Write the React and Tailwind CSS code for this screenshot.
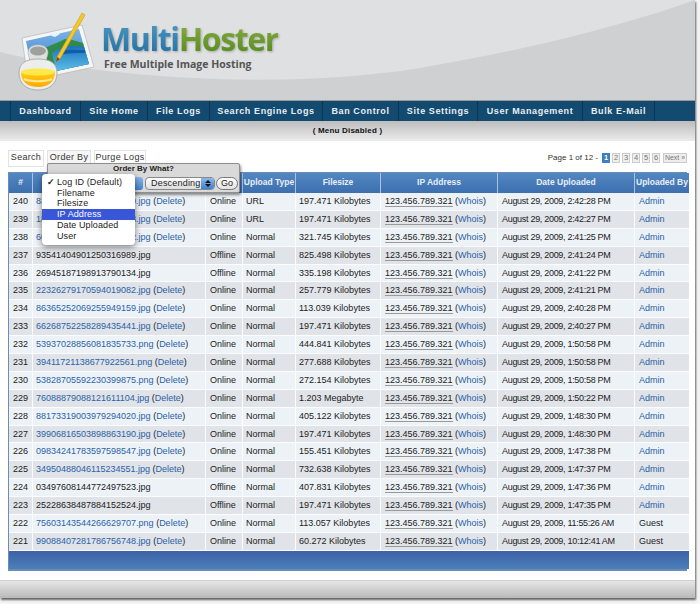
import React from 'react'

const menu = [
  { label: 'Dashboard', w: 'w-[70px]' },
  { label: 'Site Home', w: 'w-[67px]' },
  { label: 'File Logs', w: 'w-[62px]' },
  { label: 'Search Engine Logs', w: 'w-[113px]' },
  { label: 'Ban Control', w: 'w-[76px]' },
  { label: 'Site Settings', w: 'w-[79px]' },
  { label: 'User Management', w: 'w-[105px]' },
  { label: 'Bulk E-Mail', w: 'w-[72px]' },
]

const rows = [
  [240, '83483172390296749650.jpg', 'Online', 'URL', '197.471 Kilobytes', '2:42:28 PM'],
  [239, '18461205773410964218.jpg', 'Online', 'URL', '197.471 Kilobytes', '2:42:27 PM'],
  [238, '60791352448399702002.jpg', 'Online', 'Normal', '321.745 Kilobytes', '2:41:25 PM'],
  [237, '93541404901250316989.jpg', 'Offline', 'Normal', '825.498 Kilobytes', '2:41:24 PM'],
  [236, '26945187198913790134.jpg', 'Offline', 'Normal', '335.198 Kilobytes', '2:41:22 PM'],
  [235, '22326279170594019082.jpg', 'Online', 'Normal', '257.779 Kilobytes', '2:41:21 PM'],
  [234, '86365252069255949159.jpg', 'Online', 'Normal', '113.039 Kilobytes', '2:40:28 PM'],
  [233, '66268752258289435441.jpg', 'Online', 'Normal', '197.471 Kilobytes', '2:40:27 PM'],
  [232, '53937028856081835733.png', 'Online', 'Normal', '444.841 Kilobytes', '1:50:58 PM'],
  [231, '39411721138677922561.png', 'Online', 'Normal', '277.688 Kilobytes', '1:50:58 PM'],
  [230, '53828705592230399875.png', 'Online', 'Normal', '272.154 Kilobytes', '1:50:58 PM'],
  [229, '76088879088121611104.jpg', 'Online', 'Normal', '1.203 Megabyte', '1:50:22 PM'],
  [228, '88173319003979294020.jpg', 'Online', 'Normal', '405.122 Kilobytes', '1:48:30 PM'],
  [227, '39906816503898863190.jpg', 'Online', 'Normal', '197.471 Kilobytes', '1:48:30 PM'],
  [226, '09834241783597598547.jpg', 'Online', 'Normal', '155.451 Kilobytes', '1:47:38 PM'],
  [225, '34950488046115234551.jpg', 'Online', 'Normal', '732.638 Kilobytes', '1:47:37 PM'],
  [224, '03497608144772497523.jpg', 'Offline', 'Normal', '407.831 Kilobytes', '1:47:36 PM'],
  [223, '25228638487884152524.jpg', 'Offline', 'Normal', '197.471 Kilobytes', '1:47:35 PM'],
  [222, '75603143544266629707.png', 'Online', 'Normal', '113.057 Kilobytes', '11:55:26 AM'],
  [221, '99088407281786756748.jpg', 'Online', 'Normal', '60.272 Kilobytes', '10:12:41 AM'],
]

const headCell = "border-r border-[#a9c3e0] text-center text-[8.5px] font-bold text-[#e8eef6] p-0 pb-[1px] whitespace-nowrap"
const cell = "border-r border-b border-[#fafcfd] px-[3px] py-0 h-[17.9px] leading-[11px] whitespace-nowrap overflow-hidden"
const link = "text-[#2a62a8]"

function Logo() {
  return (
    <svg width="86" height="86" viewBox="0 0 86 86" className="absolute left-[16px] top-[9px]">
      <defs>
        <linearGradient id="sky" x1="0" y1="0" x2="0" y2="1">
          <stop offset="0" stopColor="#7db4e8" />
          <stop offset="1" stopColor="#2f77c4" />
        </linearGradient>
        <linearGradient id="water" x1="0" y1="0" x2="0" y2="1">
          <stop offset="0" stopColor="#1d6fc0" />
          <stop offset="1" stopColor="#5cc0e8" />
        </linearGradient>
        <linearGradient id="oil" x1="0" y1="0" x2="0" y2="1">
          <stop offset="0" stopColor="#ffd21a" />
          <stop offset="1" stopColor="#ffa800" />
        </linearGradient>
      </defs>
      <polygon points="6,29 66,16 78,58 12,72" fill="#f6f6f6" stroke="#b5b5b5" strokeWidth="0.7" />
      <polygon points="10,32 63,20 73,55 17,67" fill="url(#sky)" />
      <path d="M33 25l8-2 3 2-5 3-3-1z" fill="#e8f3fc" />
      <path d="M13 47 C28 38 40 35 49 30 C56 30 62 33 67 34 L73 55 L17 67z" fill="#2f8b45" />
      <path d="M36 44 C46 36 58 36 68 38 L73 55 L40 62z" fill="url(#water)" />
      <path d="M44 42 C52 40 60 41 69 41 L69 44 C60 44 52 44 44 46z" fill="#0f5ea8" />
      <path d="M66 4 L69 6 L44 50 L40 53 L41 48z" fill="#f3c928" stroke="#c79a14" strokeWidth="0.6" />
      <path d="M41 48 L44 50 L40 53z" fill="#7a4a18" />
      <path d="M12 44 C12 38 17 36 22 36 C27 36 32 38 32 44 L30 52 L14 52z" fill="#dfe1df" stroke="#b8b8b8" strokeWidth="0.6" />
      <ellipse cx="22" cy="42" rx="8" ry="4.500" fill="#9ea09e" />
      <path d="M3 64 C3 54 10 50 22 50 C34 50 41 54 41 64 C41 75 33 81 22 81 C11 81 3 75 3 64z" fill="#eceded" stroke="#a0a0a0" strokeWidth="0.8" />
      <path d="M5 63 C12 60 32 60 39 63 C39 73 32 78 22 78 C12 78 5 73 5 63z" fill="url(#oil)" />
      <ellipse cx="22" cy="63" rx="17" ry="3.500" fill="#ffe84a" />
      <path d="M8 70 C14 73 30 73 36 70" stroke="#ffe98a" strokeWidth="2" fill="none" />
    </svg>
  )
}

function Header() {
  return (
    <div className="relative h-[100px] overflow-hidden bg-[#dfe0e1]">
      {/* swoosh behind the logo */}
      <svg width="695" height="100" viewBox="0 0 695 100" className="absolute left-0 top-0">
        <path d="M0 52 C120 82 300 88 420 68 C540 48 640 20 695 0 L695 100 L0 100z" fill="#cfd0d1" />
      </svg>
      <Logo />
      <div className="absolute left-[101px] top-[20px] text-[32px] leading-[38px] font-bold tracking-[-1.4px] font-['Open_Sans',sans-serif] whitespace-nowrap drop-shadow-[1px_1px_1px_rgba(0,0,0,0.25)]">
        <span className="bg-gradient-to-b from-[#4f9fc9] to-[#1f6a9c] bg-clip-text text-transparent">Multi</span>
        <span className="bg-gradient-to-b from-[#8fb545] to-[#4f8418] bg-clip-text text-transparent">Hoster</span>
      </div>
      <div className="absolute left-[104px] top-[57px] text-[10.5px] leading-[14px] font-bold text-[#555] font-['Open_Sans',sans-serif] whitespace-nowrap">
        Free Multiple Image Hosting
      </div>
    </div>
  )
}

function Nav() {
  return (
    <div className="flex h-[21px] border-t border-[#9a9a9a] bg-[#124a70]">
      <div className="w-[11px] border-r border-[#0b3552]"></div>
      {menu.map((m) => (
        <div key={m.label} className={m.w + " flex items-center justify-center pt-[1px] border-r border-[#0b3552] text-[9px] font-bold tracking-[0.6px] text-[#e9eef2]"}>
          {m.label}
        </div>
      ))}
    </div>
  )
}

function Tabs() {
  return (
    <div className="flex items-center justify-between h-[31px] pl-[8px] pr-[8px] pt-[3px]">
      <div className="flex gap-[3px] text-[9px] tracking-[0.3px] text-[#333] whitespace-nowrap">
        <div className="w-[36px] h-[17px] flex items-center justify-center border border-[#e2e2e2] bg-white">Search</div>
        <div className="w-[44px] h-[17px] flex items-center justify-center border border-[#e2e2e2] bg-[#f6f6f6]">Order By</div>
        <div className="w-[52px] h-[17px] flex items-center justify-center border border-[#e2e2e2] bg-white">Purge Logs</div>
      </div>
      <div className="flex items-center gap-[2px] text-[7.5px] text-[#555] whitespace-nowrap">
        <span className="mr-[2px] text-[8px] text-[#333]">Page 1 of 12 -</span>
        <span className="w-[8px] h-[10px] flex items-center justify-center bg-[#3f7fc0] font-bold text-white">1</span>
        {[2, 3, 4, 5, 6].map((n) => (
          <span key={n} className="w-[8px] h-[10px] flex items-center justify-center border border-[#ccc] bg-[#eee] text-[#777]">{n}</span>
        ))}
        <span className="ml-[1px] w-[24px] h-[10px] flex items-center justify-center border border-[#ccc] bg-[#eee] text-[7px] text-[#777]">Next »</span>
      </div>
    </div>
  )
}

function Table() {
  return (
    <div className="mx-[8px] border border-[#6d8cb5] border-r-2 border-b-2 bg-[#3f6dab]">
      <table className="table-fixed w-[680px] border-separate border-spacing-0 text-[9px] text-[#222]">
        <colgroup>
          <col className="w-[24px]" />
          <col className="w-[173px]" />
          <col className="w-[37px]" />
          <col className="w-[53px]" />
          <col className="w-[85px]" />
          <col className="w-[117px]" />
          <col className="w-[137px]" />
          <col className="w-[54px]" />
        </colgroup>
        <thead>
          <tr className="h-[20px] bg-gradient-to-b from-[#5288c2] to-[#3d6fae]">
            <th className={headCell}>#</th>
            <th className={headCell}>Filename</th>
            <th className={headCell}>Status</th>
            <th className={headCell}>Upload Type</th>
            <th className={headCell}>Filesize</th>
            <th className={headCell}>IP Address</th>
            <th className={headCell}>Date Uploaded</th>
            <th className="text-center text-[8.5px] font-bold text-[#e8eef6] p-0 pb-[1px] whitespace-nowrap">Uploaded By</th>
          </tr>
        </thead>
        <tbody>
          {rows.map((r, i) => {
            const [id, file, status, type, size, time] = r
            const online = status === 'Online'
            return (
              <tr key={id} className={i % 2 === 0 ? "bg-[#edf2f7]" : "bg-[#e0e3e7]"}>
                <td className={cell + " pl-[4px]"}>{id}</td>
                <td className={cell}>
                  {online ? (
                    <>
                      <span className={link}>{file}</span> (<span className={link}>Delete</span>)
                    </>
                  ) : (
                    file
                  )}
                </td>
                <td className={cell + " pl-[4px]"}>{status}</td>
                <td className={cell}>{type}</td>
                <td className={cell}>{size}</td>
                <td className={cell + " pl-[4px]"}>
                  <span className="border-b border-[#999]">123.456.789.321</span> (<span className={link}>Whois</span>)
                </td>
                <td className={cell + " pl-[4px] tracking-[-0.3px]"}>August 29, 2009, {time}</td>
                <td className={"border-b border-[#fafcfd] px-[4px] py-0 leading-[11px] " + (i < 18 ? link : "")}>{i < 18 ? 'Admin' : 'Guest'}</td>
              </tr>
            )
          })}
          <tr className="h-[18px] bg-gradient-to-b from-[#3c62a6] to-[#4a80ba]">
            <td colSpan={8} className="p-0"></td>
          </tr>
        </tbody>
      </table>
    </div>
  )
}

function OrderPopup() {
  return (
    <>
      <div className="absolute left-[47px] top-[22px] w-[193px] h-[30px] rounded-[2px] border border-[#8f8f8f] bg-[#d9d9d9] shadow-[1px_2px_3px_rgba(0,0,0,0.45)]">
        <div className="text-center text-[8px] leading-[10px] font-bold text-[#222]">Order By What?</div>
        <div className="absolute left-[85px] top-[13px] w-[10px] h-[13px] rounded-r-[3px] bg-gradient-to-b from-[#8ab8ea] to-[#3f7fd0]"></div>
        <div className="absolute left-[97px] top-[13px] flex items-center">
          <div className="relative w-[70px] h-[13px] rounded-[4px] border border-[#888] bg-gradient-to-b from-white to-[#dcdcdc] pl-[5px] text-[9px] leading-[11px] tracking-[0.2px] text-[#222]">
            Descending
            <div className="absolute right-0 top-0 h-full w-[13px] rounded-r-[3px] bg-gradient-to-b from-[#8ab8ea] to-[#3f7fd0] flex flex-col items-center justify-center gap-[1px]">
              <span className="border-x-[3px] border-b-[3px] border-x-transparent border-b-[#111]"></span>
              <span className="border-x-[3px] border-t-[3px] border-x-transparent border-t-[#111]"></span>
            </div>
          </div>
          <div className="ml-[1px] w-[22px] h-[13px] flex items-center justify-center rounded-full border border-[#777] bg-gradient-to-b from-white to-[#e2e2e2] text-[9px] text-[#222]">Go</div>
        </div>
      </div>
      <div className="absolute left-[42px] top-[33px] w-[93px] h-[71px] rounded-[4px] bg-white py-[3px] shadow-[0_2px_6px_rgba(0,0,0,0.5)] text-[9px] leading-[10.700px] tracking-[0.1px] text-[#222]">
        <div className="relative pl-[15px]"><span className="absolute left-[5px] font-bold">✓</span>Log ID (Default)</div>
        <div className="pl-[15px]">Filename</div>
        <div className="pl-[15px]">Filesize</div>
        <div className="pl-[15px] bg-[#3a56d8] text-white">IP Address</div>
        <div className="pl-[15px]">Date Uploaded</div>
        <div className="pl-[15px]">User</div>
      </div>
    </>
  )
}

function App() {
  return (
    <div className="w-[700px] h-[604px] overflow-hidden bg-[#f5f5f5] font-['Liberation_Sans',sans-serif]">
      <div className="flex flex-col w-[695px] h-[598px] bg-white shadow-[1px_2px_2px_rgba(0,0,0,0.6)]">
        <Header />
        <Nav />
        <div className="flex items-center justify-center h-[20px] bg-gradient-to-b from-[#bdbdbd] to-[#ececec] text-[8px] font-bold tracking-[0.2px] text-[#111]">
          ( Menu Disabled )
        </div>
        <div className="relative flex-1">
          <Tabs />
          <Table />
          <OrderPopup />
        </div>
        <div className="h-[18px] border-t border-[#d0d0d0] bg-gradient-to-b from-[#e6e6e6] to-[#b9b9b9]"></div>
      </div>
    </div>
  )
}

export default App
